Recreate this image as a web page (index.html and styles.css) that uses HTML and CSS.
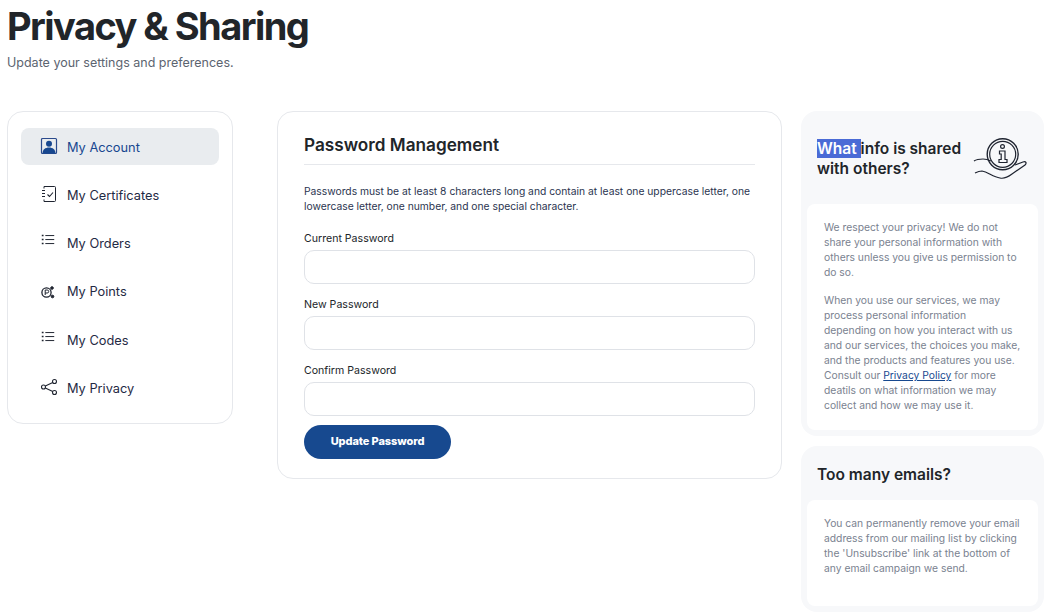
FILE: index.html
```html
<!DOCTYPE html>
<html lang="en">
  <head>
    <meta charset="UTF-8" />
    <title>Privacy &amp; Sharing</title>
    <link rel="stylesheet" href="styles.css">
  </head>
  <body>
    <div class="page-head">
      <h1>Privacy &amp; Sharing</h1>
      <p>Update your settings and preferences.</p>
    </div>

    <div class="columns">
      <div class="side-menu">
        <a href="#" class="menu-item active">
          <svg width="18" height="18" viewBox="0 0 18 18"><rect x="1.500" y="1.500" width="15" height="15" rx="1" fill="none" stroke="#2a4a8c" stroke-width="1.200"/><circle cx="9" cy="6.800" r="3" fill="#17478f"/><path d="M2.500 16.500c0-4 2.800-6 6.500-6s6.500 2 6.500 6z" fill="#17478f"/></svg>
          <span>My Account</span>
        </a>
        <a href="#" class="menu-item">
          <svg width="18" height="18" viewBox="0 0 18 18" fill="none" stroke="#1f2430"><path d="M4 1.500h10.500a1 1 0 0 1 1 1v13a1 1 0 0 1-1 1H4"/><path d="M4 1.500v2M4 14.500v2"/><path d="M2 5.500h3M2 8.500h3M2 11.500h3" stroke-width="1.200"/><path d="M7.500 9.500l2 2 3.500-4" stroke-width="1.100"/></svg>
          <span>My Certificates</span>
        </a>
        <a href="#" class="menu-item list">
          <svg width="18" height="18" viewBox="0 0 18 18" fill="none" stroke="#1f2430" stroke-width="1.100"><path d="M6 4h10M6 8.500h10M6 13h10"/><path d="M2 4h2M2 8.500h2M2 13h2" stroke-width="1.700"/></svg>
          <span>My Orders</span>
        </a>
        <a href="#" class="menu-item points">
          <svg width="18" height="18" viewBox="0 0 18 18" fill="none" stroke="#1f2430"><circle cx="6.500" cy="9.500" r="4.600" stroke-width="1.300"/><path d="M5.200 12v-5h2a1.500 1.500 0 0 1 0 3h-2" stroke-width="1"/><circle cx="12" cy="5" r="1.300" fill="#1f2430"/><circle cx="12.500" cy="13.500" r="1.300" fill="#1f2430"/></svg>
          <span>My Points</span>
        </a>
        <a href="#" class="menu-item list">
          <svg width="18" height="18" viewBox="0 0 18 18" fill="none" stroke="#1f2430" stroke-width="1.100"><path d="M6 4h10M6 8.500h10M6 13h10"/><path d="M2 4h2M2 8.500h2M2 13h2" stroke-width="1.700"/></svg>
          <span>My Codes</span>
        </a>
        <a href="#" class="menu-item">
          <svg width="18" height="18" viewBox="0 0 18 18" fill="none" stroke="#1f2430" stroke-width="1.100"><circle cx="14.500" cy="3.500" r="2"/><circle cx="14.500" cy="14.500" r="2"/><circle cx="3.500" cy="9" r="2"/><path d="M5.300 8l7.500-3.500M5.300 10l7.500 3.500"/></svg>
          <span>My Privacy</span>
        </a>
      </div>

      <div class="main-card">
        <h2>Password Management</h2>
        <p class="hint">Passwords must be at least 8 characters long and contain at least one uppercase letter, one lowercase letter, one number, and one special character.</p>
        <label>Current Password</label>
        <input type="password" />
        <label>New Password</label>
        <input type="password" />
        <label>Confirm Password</label>
        <input type="password" />
        <button>Update Password</button>
      </div>

      <div class="right-col">
        <div class="info-box">
          <div class="info-head">
            <h3><span class="selected">What </span>info is shared with others?</h3>
            <svg width="54" height="43" viewBox="0 0 54 43" fill="none" stroke="#1f2430" stroke-width="1.200"><circle cx="29.700" cy="16.300" r="15.500" stroke-width="1.400"/><circle cx="29.700" cy="16.300" r="13"/><circle cx="29.500" cy="8.500" r="1.900"/><path d="M26.500 13h5.500v8.500h2v3h-8v-3h2.200v-5.500h-1.700z"/><path d="M1 23c3-2 6-2 9-2 4 0 6 1 8 2"/><path d="M42 27l8-3c3-1 4 1 2 3l-13 9c-4 3-8 5-12 4-7-1-12-6-18-7-3 0-5 1-7 2"/></svg>
          </div>
          <div class="info-body">
            <p>We respect your privacy! We do not share your personal information with others unless you give us permission to do so.</p>
            <p>When you use our services, we may process personal information<br>depending on how you interact with us and our services, the choices you make, and the products and features you use. Consult our <a href="#">Privacy Policy</a> for more deatils on what information we may collect and how we may use it.</p>
          </div>
        </div>
        <div class="info-box">
          <h3 class="email-title">Too many emails?</h3>
          <div class="info-body email-body">
            <p>You can permanently remove your email address from our mailing list by clicking the 'Unsubscribe' link at the bottom of any email campaign we send.</p>
          </div>
        </div>
      </div>
    </div>
  </body>
</html>
```

FILE: styles.css
```css
* {
  font-family: "Inter", sans-serif;
  margin: 0;
  padding: 0;
  box-sizing: border-box;
}

body {
  background: #fff;
  padding: 0 12px 0 7px;
  overflow: hidden;
  color: #1f2430;
}

.page-head {
  height: 111px;
}

.page-head h1 {
  font-size: 38px;
  font-weight: 700;
  line-height: 46px;
  letter-spacing: -1.550px;
  padding-top: 3px;
  height: 50px;
  color: #212529;
}

.page-head p {
  font-size: 12.500px;
  line-height: 24px;
  margin-top: 1px;
  color: #5c6470;
}

.columns {
  display: flex;
  align-items: flex-start;
}

/* Left menu */
.side-menu {
  width: 226px;
  height: 313px;
  margin-right: 44px;
  padding: 16px 13px;
  border: 1px solid #e6e8ec;
  border-radius: 16px;
  display: flex;
  flex-direction: column;
}

.menu-item {
  display: flex;
  flex-shrink: 0;
  align-items: center;
  gap: 9px;
  height: 37px;
  margin-bottom: 11.200px;
  padding-left: 19px;
  border-radius: 8px;
  font-size: 12.800px;
  color: #1f2a44;
  text-decoration: none;
}

.menu-item span {
  padding-top: 2px;
}

.menu-item.active {
  background: #e9ecef;
  color: #17478f;
}

.menu-item svg {
  flex-shrink: 0;
  margin-top: -1px;
}

.menu-item.list svg {
  margin-top: -5px;
  width: 16px;
  margin-right: 2px;
}

.menu-item.points svg {
  margin-top: 2px;
}

.menu-item.points span {
  margin-top: -2px;
}

/* Password card */
.main-card {
  width: 505px;
  height: 368px;
  margin-right: 19px;
  padding: 20px 26px;
  border: 1px solid #e6e8ec;
  border-radius: 16px;
}

.main-card h2 {
  font-size: 17.200px;
  font-weight: 600;
  line-height: 26px;
  padding-bottom: 6px;
  border-bottom: 1px solid #e6e8ec;
  color: #212529;
}

.hint {
  font-size: 10.300px;
  line-height: 15px;
  margin-top: 19px;
  margin-bottom: 17px;
  color: #2b3550;
}

label {
  display: block;
  font-size: 10.600px;
  line-height: 15px;
  margin-bottom: 4px;
  color: #212529;
}

input {
  display: block;
  width: 100%;
  height: 34px;
  margin-bottom: 13px;
  border: 1px solid #dfe2e7;
  border-radius: 10px;
  background: #fff;
}

button {
  display: block;
  width: 147px;
  height: 34px;
  margin-top: -4px;
  border: none;
  border-radius: 17px;
  background: #17498f;
  color: #fff;
  font-size: 11px;
  font-weight: 800;
  letter-spacing: -0.100px;
  padding-bottom: 2px;
}

/* Right info boxes */
.right-col {
  width: 243px;
  display: flex;
  flex-direction: column;
  gap: 10px;
}

.info-box {
  background: #f7f8fa;
  border-radius: 16px;
  padding: 0 6px 6px;
}

.info-head {
  display: flex;
  justify-content: space-between;
  align-items: center;
  height: 93px;
  padding: 0 11px 0 10px;
}

.info-head svg {
  flex-shrink: 0;
  margin-top: 4px;
}

.info-box h3 {
  font-size: 15.500px;
  font-weight: 600;
  line-height: 20px;
  color: #212529;
}

.info-head h3 {
  width: 150px;
  padding-top: 2px;
}

.selected {
  background: #4a6bd6;
  color: #fff;
}

.info-body {
  background: #fff;
  border-radius: 8px;
  padding: 16px 14px 17px 17px;
  font-size: 10.300px;
  line-height: 15px;
  color: #7a8290;
}

.info-body p + p {
  margin-top: 13px;
}

.info-body a {
  color: #17498f;
}

.email-title {
  padding: 19px 10px 15px;
}

.email-body {
  height: 106px;
}
```
